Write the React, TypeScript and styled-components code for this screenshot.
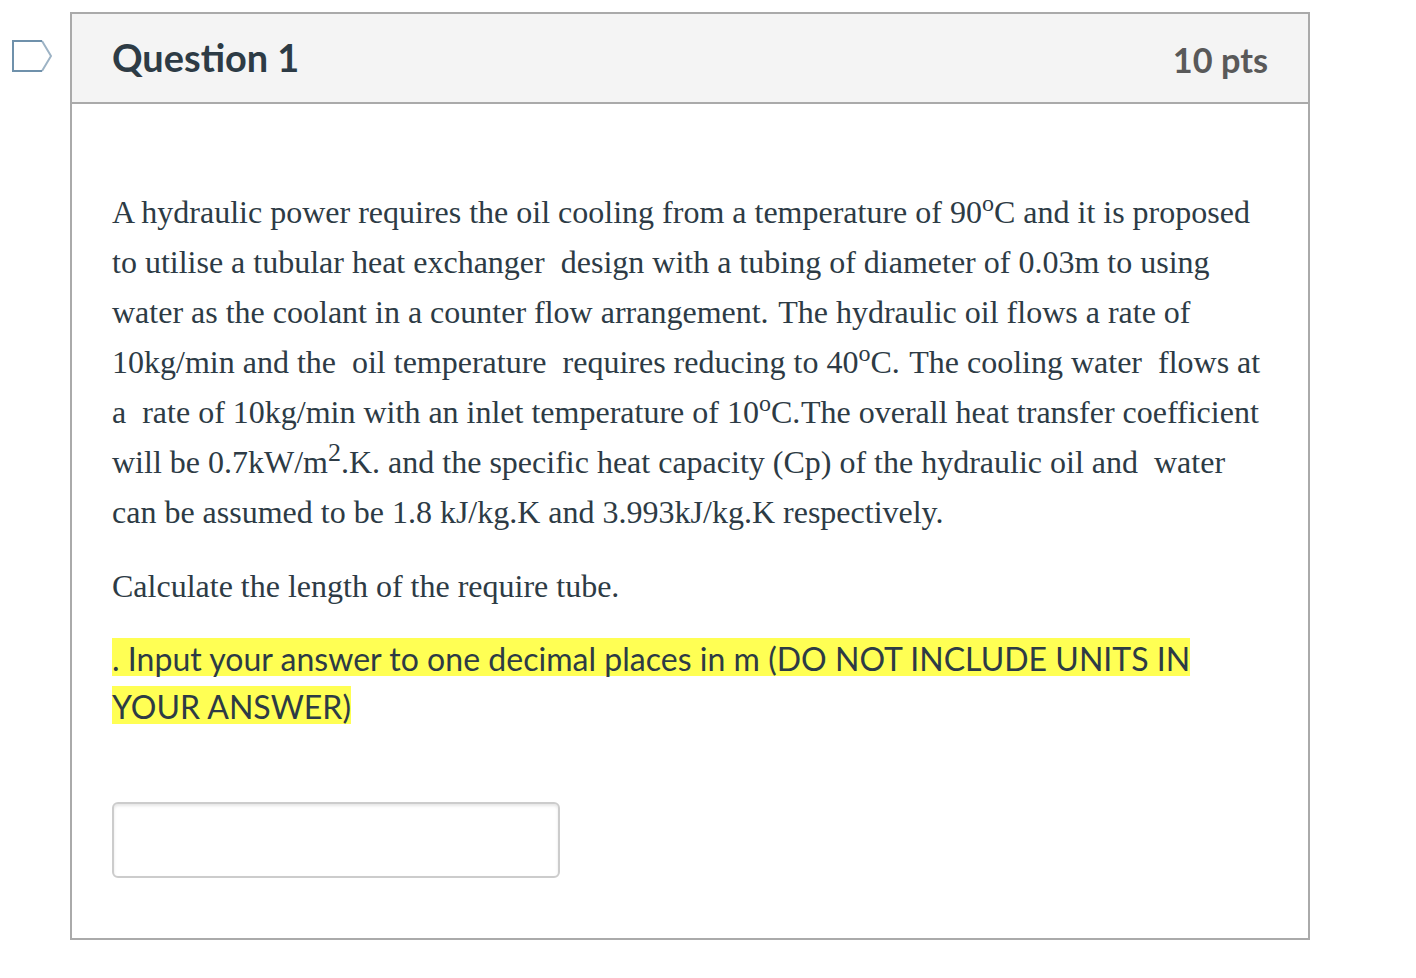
import React from "react";
import styled, { createGlobalStyle } from "styled-components";

const Global = createGlobalStyle`
  *, *::before, *::after { box-sizing: border-box; }
  body { margin: 0; background: #fff; color: #2d3b45; overflow: hidden; }
`;
const Page = styled.main`
  display: flex;
  align-items: flex-start;
  width: 1416px;
  height: 978px;
  padding: 12px 0 0 12px;
  font-family: Lato, sans-serif;
`;
const Flag = styled.svg`
  flex: none;
  width: 40px;
  height: 32px;
  margin: 28px 18px 0 0;
`;
const Card = styled.section`
  width: 1240px;
  height: 928px;
  border: 2px solid #aaa;
`;
const Header = styled.header`
  display: flex;
  justify-content: space-between;
  align-items: center;
  height: 90px;
  padding: 0 40px;
  background: #f4f4f4;
  border-bottom: 2px solid #aaa;
`;
const Title = styled.h1`
  margin: 0;
  padding-bottom: 1px;
  font-size: 37.9px;
  line-height: 48px;
  font-weight: 700;
`;
const Points = styled.span`
  padding-top: 3px;
  font-size: 34.3px;
  line-height: 44px;
  font-weight: 700;
  color: #595959;
`;
const Body = styled.div`
  padding: 83px 40px 0;
`;
const Text = styled.p`
  margin: 0 0 24px;
  font-family: "Liberation Serif", serif;
  font-size: 32px;
  line-height: 50px;
  white-space: pre;
`;
const Line = styled.span`
  display: block;
  width: max-content;
`;
const Sentence = styled.span<{ $gap: number }>`
  margin-left: ${(p) => p.$gap}px;
`;
const Raised = styled.sup<{ $size?: number }>`
  position: relative;
  top: -12px;
  font-size: ${(p) => p.$size ?? 24}px;
  line-height: 0;
  vertical-align: baseline;
`;
const Instruction = styled.p`
  display: flex;
  flex-direction: column;
  align-items: flex-start;
  gap: 10px;
  margin: 0;
  padding-top: 3px;
  font-size: 32px;
  letter-spacing: 0.027px;
  white-space: pre;
`;
const Mark = styled.mark`
  height: 38px;
  line-height: 42px;
  color: inherit;
  background: #ffff54;
`;
const Answer = styled.input`
  display: block;
  width: 448px;
  height: 76px;
  margin-top: 78px;
  padding: 8px 16px;
  font: 32px Lato, sans-serif;
  border: 2px solid #ccc;
  border-radius: 6px;
  outline: none;
  box-shadow: inset 0 2px 3px rgba(0, 0, 0, 0.1);
`;

export default function App() {
  return (
    <>
      <Global />
      <Page>
        <Flag viewBox="0 0 40 32" fill="none" strokeWidth="2">
          <path d="M30 1L39 16L30 31" stroke="#9db3c5" />
          <path d="M30 1H1V31H30" stroke="#6f91ab" />
        </Flag>
        <Card>
          <Header>
            <Title>Question 1</Title>
            <Points>10 pts</Points>
          </Header>
          <Body>
            <Text>
              <Line>A hydraulic power requires the oil cooling from a temperature of 90<Raised>o</Raised>C and it is proposed</Line>
              <Line>to utilise a tubular heat exchanger  design with a tubing of diameter of 0.03m to using</Line>
              <Line>water as the coolant in a counter flow arrangement. <Sentence $gap={1.6}>The hydraulic oil flows a rate of</Sentence></Line>
              <Line>10kg/min and the  oil temperature  requires reducing to 40<Raised>o</Raised>C. <Sentence $gap={1.4}>The cooling water  flows at</Sentence></Line>
              <Line>a  rate of 10kg/min with an inlet temperature of 10<Raised>o</Raised>C.<Sentence $gap={0.7}>The overall heat transfer coefficient</Sentence></Line>
              <Line>will be 0.7kW/m<Raised $size={26}>2</Raised>.K. and the specific heat capacity (Cp) of the hydraulic oil and  water</Line>
              <Line>can be assumed to be 1.8 kJ/kg.K and 3.993kJ/kg.K respectively.</Line>
            </Text>
            <Text><Line>Calculate the length of the require tube.</Line></Text>
            <Instruction>
              <Mark>. Input your answer to one decimal places in m (DO NOT INCLUDE UNITS IN</Mark>
              <Mark>YOUR ANSWER)</Mark>
            </Instruction>
            <Answer aria-label="Answer" />
          </Body>
        </Card>
      </Page>
    </>
  );
}
